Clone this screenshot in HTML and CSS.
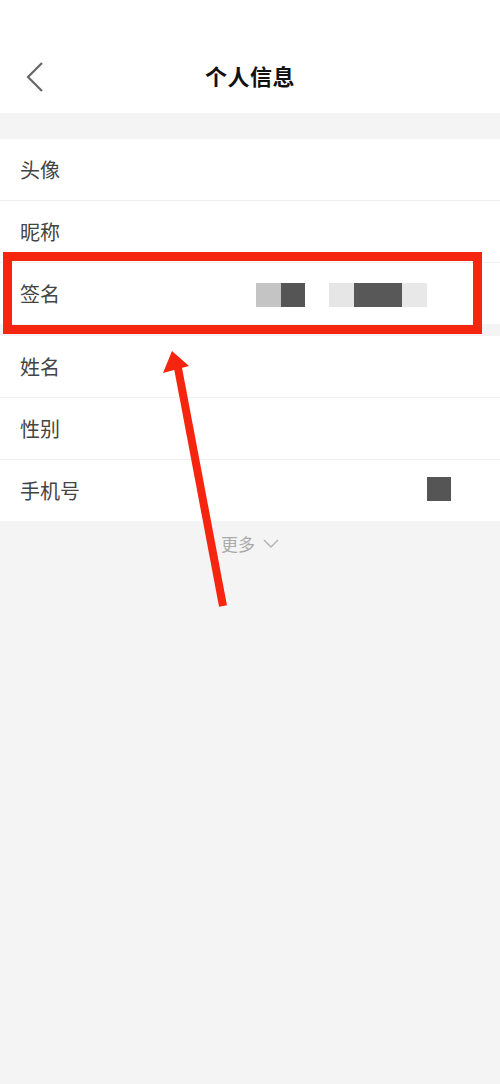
FILE: index.html
```html
<!DOCTYPE html>
<html lang="zh">
<head>
<meta charset="utf-8">
<link rel="stylesheet" href="styles.css">
</head>
<body>
<div class="page">
  <header class="header">
    <svg class="back" width="24" height="34" viewBox="0 0 24 34">
      <polyline points="17,3 3,17 17,31" fill="none" stroke="#666" stroke-width="2.2"/>
    </svg>
    <h1 class="title">个人信息</h1>
  </header>

  <section class="group group-first">
    <div class="row line"><span class="label">头像</span></div>
    <div class="row line"><span class="label">昵称</span></div>
    <div class="row">
      <span class="label">签名</span>
      <div class="mosaic">
        <span class="px c1"></span><span class="px c2"></span>
        <span class="px gap"></span>
        <span class="px c3"></span><span class="px c4"></span><span class="px c5"></span>
      </div>
    </div>
  </section>

  <section class="group group-second">
    <div class="row line"><span class="label">姓名</span></div>
    <div class="row line"><span class="label">性别</span></div>
    <div class="row">
      <span class="label">手机号</span>
      <span class="square"></span>
    </div>
  </section>

  <div class="more">
    <span>更多</span>
    <svg width="16" height="10" viewBox="0 0 16 10"><polyline points="1,1 8,8 15,1" fill="none" stroke="#b0b0b0" stroke-width="1.4"/></svg>
  </div>

  <svg class="annot" width="500" height="1084" viewBox="0 0 500 1084">
    <rect x="7.5" y="256.5" width="470" height="73" fill="none" stroke="#f5250f" stroke-width="9"/>
    <line x1="223" y1="606" x2="178" y2="368" stroke="#f5250f" stroke-width="8"/>
    <polygon points="172,351 163,373 189,366" fill="#f5250f"/>
  </svg>
</div>
</body>
</html>
```

FILE: styles.css
```css
html, body {
  margin: 0;
  padding: 0;
}
body {
  background: #f4f4f4;
  font-family: "Noto Sans CJK SC", "Noto Sans", sans-serif;
}
.page {
  position: relative;
  width: 500px;
  height: 1084px;
  overflow: hidden;
  background: #f4f4f4;
}
.header {
  height: 113px;
  box-sizing: border-box;
  padding-top: 60px;
  background: #ffffff;
  display: flex;
  align-items: flex-start;
  justify-content: center;
  position: relative;
}
.back {
  position: absolute;
  left: 25px;
  top: 60px;
}
.title {
  margin: 0;
  font-size: 22px;
  line-height: 30px;
  font-weight: 700;
  color: #111;
  letter-spacing: 0.5px;
}
.group {
  background: #ffffff;
}
.group-first {
  margin-top: 26px;
}
.group-second {
  margin-top: 12px;
}
.row {
  height: 61px;
  display: flex;
  align-items: center;
  padding-left: 20px;
}
.row.line {
  border-bottom: 1px solid #f0f0f0;
}
.label {
  font-size: 20px;
  color: #444;
  line-height: 1;
}
.mosaic {
  display: flex;
  margin-left: 196px;
  margin-top: 2px;
}
.px {
  width: 24px;
  height: 24px;
}
.c1 { background: #c4c4c4; width: 25px; }
.c2 { background: #555555; }
.gap { background: transparent; }
.c3 { background: #e6e6e6; width: 25px; }
.c4 { background: #585858; width: 48px; }
.c5 { background: #e8e8e8; width: 25px; }
.square {
  width: 24px;
  height: 24px;
  background: #555555;
  margin-left: 347px;
  margin-top: -3px;
}
.more {
  display: flex;
  align-items: center;
  justify-content: center;
  gap: 8px;
  margin-top: 10px;
  color: #aaaaaa;
  font-size: 17px;
}
.annot {
  position: absolute;
  left: 0;
  top: 0;
  pointer-events: none;
}
```
